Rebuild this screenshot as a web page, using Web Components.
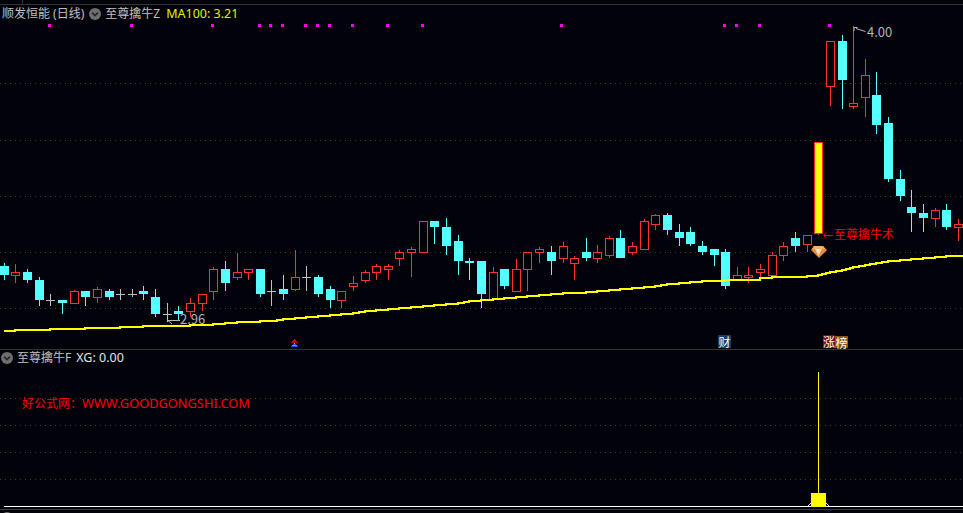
<!DOCTYPE html>
<html lang="zh">
<head>
<meta charset="utf-8">
<title>至尊擒牛</title>
<style>
  html, body { margin: 0; padding: 0; background: #02020b; }
  body { font-family: "Noto Sans", "Noto Sans CJK SC", "Liberation Sans", sans-serif; font-size: 12px; overflow: hidden; }
  .latin { font-family: "Noto Sans", sans-serif; font-size: 12.8px; }
</style>
</head>
<body>
<quote-chart>
  <kline-pane slot="top">
    <pane-legend>
      <legend-text tone="title">顺发恒能 (日线)</legend-text>
      <legend-toggle></legend-toggle>
      <legend-text tone="title" gap="4">至尊擒牛Z</legend-text>
      <legend-text tone="ma" gap="6">MA100: 3.21</legend-text>
    </pane-legend>
    <chart-note x="180" y="311" tone="label">2.96</chart-note>
    <chart-note x="867" y="24" tone="label">4.00</chart-note>
    <chart-note x="834" y="226" tone="signal">至尊擒牛术</chart-note>
    <event-badge x="718" y="335" w="13" tone="blue">财</event-badge>
    <event-badge x="823" y="335" w="12" tone="red">涨</event-badge>
    <event-badge x="835" y="336" w="13" tone="brown">榜</event-badge>
  </kline-pane>
  <indicator-pane slot="bottom">
    <pane-legend pad="1">
      <legend-toggle></legend-toggle>
      <legend-text tone="title" gap="4">至尊擒牛F</legend-text>
      <legend-text tone="value" gap="5">XG: 0.00</legend-text>
    </pane-legend>
    <chart-note x="22" y="45" tone="site">好公式网：<span class="latin">WWW.GOODGONGSHI.COM</span></chart-note>
  </indicator-pane>
</quote-chart>

<script>
// [col, type, high, bodyTop, bodyBottom, low]   u=hollow red, d=cyan, n=grey doji
const CANDLES = [
[4,'d',263,266,275,280],[15,'u',264,272,276,283],[27,'d',269,272,280,283],[39,'d',277,280,300,306],
[50,'n',294,300,300,306],[62,'d',300,300,303,314],[74,'u',290,291,304,304],[85,'d',291,291,297,306],
[97,'u',287,289,298,303],[109,'d',289,291,297,300],[120,'n',289,294,294,300],[132,'n',289,294,294,297],
[143,'d',286,291,294,300],[155,'d',289,297,314,317],[167,'n',303,314,314,322],[178,'d',306,311,314,320],
[190,'u',298,303,312,317],[202,'u',294,294,304,311],[213,'u',267,269,292,300],[225,'d',261,269,283,291],
[237,'u',253,272,278,280],[248,'u',269,269,273,280],[260,'d',269,269,294,297],[271,'n',280,291,291,306],
[283,'d',275,289,294,300],[295,'u',250,277,290,291],[306,'n',266,277,277,291],[318,'d',275,277,294,297],
[330,'d',286,289,300,308],[341,'u',291,291,301,308],[353,'u',276,283,287,291],[365,'u',270,272,281,283],
[376,'u',264,266,273,280],[388,'u',264,266,270,280],[399,'u',250,252,259,266],[411,'u',247,249,253,277],
[423,'u',221,221,253,253],[434,'d',221,221,227,244],[446,'d',218,227,246,255],[458,'d',235,241,261,275],
[469,'d',258,261,263,280],[481,'d',261,261,294,308],[493,'u',267,272,300,301],[504,'d',269,269,286,289],
[516,'u',259,269,292,292],[527,'u',252,252,270,291],[539,'u',247,249,253,263],[551,'d',246,252,261,275],
[563,'u',242,246,259,263],[574,'u',256,258,264,280],[586,'d',238,252,258,261],[597,'u',245,252,259,263],
[609,'u',236,238,256,258],[620,'d',230,238,258,258],[632,'u',242,246,253,255],[644,'u',219,221,250,250],
[655,'u',214,215,225,230],[667,'d',213,215,230,235],[679,'d',224,232,238,246],[690,'d',227,232,244,246],
[702,'d',241,246,252,255],[714,'d',249,249,255,266],[725,'d',249,252,286,289],[737,'u',267,275,280,281],
[748,'u',267,275,278,283],[760,'u',264,269,273,280],[772,'u',252,255,276,276],[783,'u',242,246,256,261],
[795,'d',232,238,246,252],[807,'u',235,235,245,252],
[830,'u',41,41,87,106],[842,'d',35,41,80,109],[853,'u',26,103,107,109],[865,'u',59,75,98,117],
[876,'d',72,95,125,134],[888,'d',117,123,179,182],[900,'d',170,179,196,201],[911,'d',190,207,213,232],
[923,'d',204,213,218,232],[935,'u',208,210,219,227],[946,'d',204,210,227,230],[958,'u',219,224,228,241]
];
const MA = [[4,331],[15,330],[50,329],[85,328],[120,327],[143,326],[190,325],[213,324],[225,323],[237,322],
[260,321],[277,320],[283,319],[295,318],[306,317],[318,316],[330,315],[341,314],[353,313],[359,312],[365,311],
[376,310],[388,309],[399,308],[411,307],[423,306],[434,305],[446,304],[458,303],[464,302],[469,301],[481,300],
[493,299],[504,298],[516,297],[527,296],[539,295],[551,294],[563,293],[586,292],[597,291],[609,290],[620,289],
[632,288],[644,287],[655,286],[661,285],[667,284],[679,283],[690,282],[702,281],[725,280],[760,278],[772,277],
[807,276],[818,275],[822,274],[826,273],[830,272],[836,271],[842,270],[846,269],[850,268],[853,267],[859,266],
[865,265],[870,264],[876,263],[882,262],[888,261],[900,260],[911,259],[923,258],[935,257],[946,256]];
const MARKS = [48,130,211,258,269,281,304,316,328,351,386,421,560,723,735,758,828];
const BG = '#02020b', RED = '#ff3232', CYAN = '#54ffff', GREY = '#c0c0c0';

const dotted = ys => ys.map(y => `<line x1="0" x2="963" y1="${y+.5}" y2="${y+.5}" stroke="#3c3c3c" stroke-dasharray="1 4"/>`).join('');

function candle([x,t,h,a,b,l]) {
  const cx = x + .5;
  const col = t === 'u' ? RED : t === 'd' ? CYAN : GREY;
  let s = `<line x1="${cx}" x2="${cx}" y1="${h}" y2="${l}" stroke="${col}"/>`;
  if (t === 'u') s += `<rect x="${x-3.5}" y="${a+.5}" width="8" height="${b-a-1}" fill="${BG}" stroke="${RED}"/>`;
  else if (t === 'd') s += `<rect x="${x-4}" y="${a}" width="9" height="${b-a}" fill="${CYAN}"/>`;
  else s += `<rect x="${x-4}" y="${a}" width="9" height="1" fill="${GREY}"/>`;
  return s;
}
function maPath() {
  let d = `M${MA[0][0]} ${MA[0][1]}`;
  for (let i = 1; i < MA.length; i++) d += `H${MA[i][0]}V${MA[i][1]}`;
  return d + 'H963';
}

const paneStyle = `
  :host { display: block; position: relative; overflow: hidden; background: ${BG}; }
  svg { position: absolute; inset: 0; display: block; }
`;

class QuoteChart extends HTMLElement {
  constructor() {
    super();
    this.attachShadow({mode:'open'}).innerHTML = `<style>
      :host { display: grid; grid-template-rows: 350px 163px; width: 963px; height: 513px; background: ${BG}; }
    </style><slot name="top"></slot><slot name="bottom"></slot>`;
  }
}

class KlinePane extends HTMLElement {
  constructor() {
    super();
    const pyramid = [
      [294,339,1,'#d00000'],[293,340,3,'#e00000'],[292,341,5,'#d00000'],[291,342,7,'#b00000'],
      [294,343,1,'#18e0ff'],[293,344,3,'#2040ff'],[292,345,5,'#18c8ff'],[291,346,7,'#2040ff']
    ].map(([x,y,w,c]) => `<rect x="${x}" y="${y}" width="${w}" height="1" fill="${c}"/>`).join('');
    this.attachShadow({mode:'open'}).innerHTML = `<style>${paneStyle}</style>
      <svg width="963" height="350" viewBox="0 0 963 350" shape-rendering="crispEdges" fill="none">
        <rect x="0" y="4" width="963" height="1" fill="#333"/>
        <rect x="22" y="0" width="1" height="4" fill="#333"/>
        <rect x="0" y="349" width="963" height="1" fill="#333"/>
        ${dotted([83,140,196,252,308])}
        ${MARKS.map(x => `<rect x="${x}" y="24" width="3" height="3" fill="#ff00ff"/>`).join('')}
        ${CANDLES.map(candle).join('')}
        <line x1="818.5" x2="818.5" y1="142" y2="235" stroke="${RED}"/>
        <rect x="814.5" y="142.5" width="8" height="91" fill="#ffff00" stroke="#ff2a1a"/>
        <path d="${maPath()}" stroke="#ffff00" stroke-width="2"/>
        ${pyramid}
        <g shape-rendering="geometricPrecision">
          <path d="M180 320.5H168M168 320.5l4 3.5" stroke="#b8b8b8" stroke-width="1"/>
          <path d="M865.5 31.5L856 28.5M854 27.5h3.5M854 27.5v3.5" stroke="#b8b8b8" stroke-width="1"/>
          <path d="M824 235.5H833" stroke="#ff0000" stroke-width="1"/>
          <path d="M823.5 235.5l3 -2.5M823.5 235.5l3 2.5" stroke="#ff0000" stroke-width="1"/>
          <polygon points="814,246 823,246 827,250 819,258 811,250" fill="#e8883a"/>
          <polygon points="814,246 823,246 825,249 812,249" fill="#f4b070"/>
          <polygon points="815,249 822,249 818.5,256" fill="#ffd8a8"/>
          <polygon points="817,249 820,249 818.5,253" fill="#fff0d8"/>
        </g>
      </svg>
      <slot></slot>`;
  }
}

class IndicatorPane extends HTMLElement {
  constructor() {
    super();
    this.attachShadow({mode:'open'}).innerHTML = `<style>${paneStyle}</style>
      <svg width="963" height="163" viewBox="0 350 963 163" shape-rendering="crispEdges" fill="none">
        ${dotted([398,425,452,479])}
        <rect x="4" y="506" width="959" height="1" fill="#ffffff"/>
        <rect x="0" y="509" width="963" height="1" fill="#3c3c3c"/>
        <path d="M808 506L811 503M829 506L826 503" stroke="#e8e8e8" shape-rendering="geometricPrecision"/>
        <rect x="818" y="372" width="1" height="122" fill="#ffff00"/>
        <rect x="811" y="493" width="15" height="14" fill="#ffff00"/>
        <circle cx="7" cy="518" r="6" fill="#707070" shape-rendering="geometricPrecision"/>
      </svg>
      <slot></slot>`;
  }
}

class PaneLegend extends HTMLElement {
  constructor() {
    super();
    this.attachShadow({mode:'open'}).innerHTML = `<style>
      :host { display: flex; align-items: center; position: relative; height: 16px; margin-top: 6px; padding-left: 2px; white-space: nowrap; }
      :host([pad="1"]) { margin-top: 0; padding-left: 1px; }
    </style><slot></slot>`;
  }
}

class LegendText extends HTMLElement {
  static get observedAttributes() { return ['gap']; }
  constructor() {
    super();
    this.attachShadow({mode:'open'}).innerHTML = `<style>
      :host { display: block; font: 12px/16px "Noto Sans", "Noto Sans CJK SC", "Liberation Sans", sans-serif; }
      :host([tone="title"]) { color: #c0c0c0; }
      :host([tone="ma"]) { color: #e0f000; font-size: 12.5px; }
      :host([tone="value"]) { color: #e4e4e4; font-size: 12.5px; }
    </style><slot></slot>`;
  }
  attributeChangedCallback(n, o, v) { this.style.marginLeft = v + 'px'; }
}

class LegendToggle extends HTMLElement {
  constructor() {
    super();
    this.attachShadow({mode:'open'}).innerHTML = `<style>
      :host { display: block; width: 12px; height: 12px; flex: none; margin-left: 5px; }
      :host(:first-child) { margin-left: 0; }
      svg { display: block; }
    </style>
    <svg width="12" height="12" viewBox="0 0 12 12">
      <circle cx="6" cy="6" r="6" fill="#6e6e6e"/>
      <path d="M3 4.6L6 7.6L9 4.6" fill="none" stroke="#26262c" stroke-width="1.6"/>
    </svg>`;
  }
}

class ChartNote extends HTMLElement {
  constructor() {
    super();
    this.attachShadow({mode:'open'}).innerHTML = `<style>
      :host { position: absolute; left: var(--x); top: var(--y); white-space: nowrap; font: 12px/16px "Noto Sans CJK SC", "Liberation Sans", sans-serif; }
      :host([tone="label"]) { color: #b4b4b4; font-size: 13px; }
      :host([tone="signal"]) { color: #ff0000; }
      :host([tone="site"]) { color: #ff0000; }
    </style><slot></slot>`;
  }
  connectedCallback() {
    this.style.setProperty('--x', this.getAttribute('x') + 'px');
    this.style.setProperty('--y', this.getAttribute('y') + 'px');
  }
}

class EventBadge extends HTMLElement {
  constructor() {
    super();
    this.attachShadow({mode:'open'}).innerHTML = `<style>
      :host { position: absolute; left: var(--x); top: var(--y); width: var(--w); height: 13px; display: flex; align-items: center; justify-content: center; color: #fff; font: 12px/13px "Noto Sans CJK SC", sans-serif; }
      :host([tone="blue"]) { background: #0c416c; }
      :host([tone="red"]) { background: #7c0a0a; }
      :host([tone="brown"]) { background: #8a5516; height: 12px; }
    </style><slot></slot>`;
  }
  connectedCallback() {
    for (const k of ['x','y','w']) this.style.setProperty('--'+k, this.getAttribute(k) + 'px');
  }
}

customElements.define('quote-chart', QuoteChart);
customElements.define('kline-pane', KlinePane);
customElements.define('indicator-pane', IndicatorPane);
customElements.define('pane-legend', PaneLegend);
customElements.define('legend-text', LegendText);
customElements.define('legend-toggle', LegendToggle);
customElements.define('chart-note', ChartNote);
customElements.define('event-badge', EventBadge);
</script>
</body>
</html>
